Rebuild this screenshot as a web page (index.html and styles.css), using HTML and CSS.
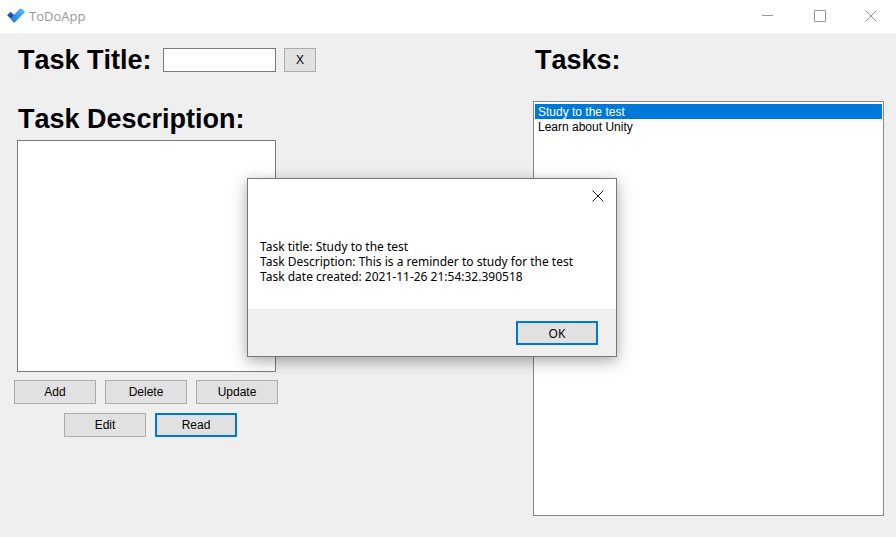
FILE: index.html
```html
<!DOCTYPE html>
<html lang="en">
<head>
<meta charset="utf-8">
<meta name="viewport" content="width=device-width, initial-scale=1">
<title>ToDoApp</title>
<link rel="stylesheet" href="styles.css">
</head>
<body>
<header class="titlebar">
  <svg class="logo" viewBox="0 0 18 16" aria-hidden="true">
    <defs>
      <linearGradient id="tick" x1="0" y1="1" x2="1" y2="0">
        <stop offset="0.25" stop-color="#2a86e2"/>
        <stop offset="1" stop-color="#56c0f8"/>
      </linearGradient>
    </defs>
    <path d="M0.3 7.2 L3.6 3.9 L10 10 L7 13.8 Z" fill="#1b55b4"/>
    <path d="M3.6 10.4 L12.8 0.8 Q13.8 0 14.8 0.8 L17.4 3.3 Q17.9 4 17.4 4.7 L7.9 14.2 Q7 15 6.2 14.2 Z" fill="url(#tick)"/>
    <path d="M0.3 7.2 L3.6 3.9 L6.9 7 L3.6 10.4 Z" fill="#1b55b4"/>
  </svg>
  <h1 class="app-name">ToDoApp</h1>
  <div class="window-controls">
    <button class="window-button" type="button" aria-label="Minimize"><svg viewBox="0 0 12 12"><path d="M0 5.5H11"/></svg></button>
    <button class="window-button" type="button" aria-label="Maximize"><svg viewBox="0 0 12 12"><path d="M0.5 0.5H11.5V11.5H0.5Z"/></svg></button>
    <button class="window-button" type="button" aria-label="Close"><svg viewBox="0 0 12 12"><path d="M0.5 0.5L11.5 11.5M11.5 0.5L0.5 11.5"/></svg></button>
  </div>
</header>
<main class="workspace">
  <form class="editor">
    <div class="title-row">
      <label class="heading" for="title">Task Title:</label>
      <input class="field title-field" id="title" type="text">
      <button class="button clear" type="button">X</button>
    </div>
    <label class="heading" for="description">Task Description:</label>
    <textarea class="field description" id="description"></textarea>
    <div class="actions">
      <button class="button" type="button">Add</button>
      <button class="button" type="button">Delete</button>
      <button class="button" type="button">Update</button>
    </div>
    <div class="actions actions-second">
      <button class="button" type="button">Edit</button>
      <button class="button default" type="button">Read</button>
    </div>
  </form>
  <section class="tasks">
    <label class="heading" for="tasks">Tasks:</label>
    <select class="field task-list" id="tasks" size="20">
      <option selected>Study to the test</option>
      <option>Learn about Unity</option>
    </select>
  </section>
</main>
<div class="dialog" role="dialog" aria-label="Task details">
  <button class="dialog-close" type="button" aria-label="Close"><svg viewBox="0 0 12 12"><path d="M0.5 0.5L11.5 11.5M11.5 0.5L0.5 11.5"/></svg></button>
  <p class="dialog-text">Task title: Study to the test<br>Task Description: This is a reminder to study for the test<br>Task date created: 2021-11-26 21:54:32.390518</p>
  <div class="dialog-footer">
    <button class="button default" type="button">OK</button>
  </div>
</div>
</body>
</html>
```
FILE: styles.css
```css
* {
  box-sizing: border-box;
}

body {
  margin: 0;
  min-height: 100vh;
  display: flex;
  flex-direction: column;
  background: #efefef;
  color: #000;
  font: 12px/15px "Liberation Sans", Arial, sans-serif;
}

button {
  font: inherit;
  color: inherit;
}

.titlebar {
  display: flex;
  align-items: center;
  height: 33px;
  padding: 0 0 2px 7px;
  background: #fff;
}

.logo {
  width: 18px;
  height: 16px;
}

.app-name {
  margin: 0 0 0 4px;
  font: 13px/20px "Open Sans", "Noto Sans", sans-serif;
  color: #999;
}

.window-controls {
  display: flex;
  align-self: stretch;
  margin-left: auto;
}

.window-button {
  display: grid;
  place-items: center;
  width: 52px;
  padding: 0;
  border: 0;
  background: none;
}

.window-button:last-child {
  width: 50px;
}

.window-button svg,
.dialog-close svg {
  width: 12px;
  height: 12px;
  fill: none;
  stroke: #999;
}

.workspace {
  flex: 1;
  display: grid;
  grid-template-columns: 520fr 351fr;
  padding: 11px 12px 21px 13px;
}

.editor {
  display: flex;
  flex-direction: column;
  align-items: flex-start;
}

.heading {
  padding-left: 5px;
  font: bold 27px/32px "Liberation Sans", Arial, sans-serif;
  font-kerning: none;
}

.title-row {
  display: flex;
  align-items: center;
  margin-bottom: 27px;
}

.title-row .heading {
  min-width: 144px;
}

.field {
  border: 1px solid #7a7a7a;
  border-radius: 0;
  background: #fff;
  font: inherit;
  outline: 0;
}

.title-field {
  width: 113px;
  height: 24px;
  margin: 0 8px 0 6px;
}

.button {
  width: 82px;
  height: 24px;
  padding: 0;
  border: 1px solid #adadad;
  background: #e1e1e1;
}

.default {
  border: 2px solid #0078d7;
}

.clear {
  width: 32px;
}

.description {
  width: 259px;
  height: 232px;
  margin: 5px 0 8px 4px;
  resize: none;
}

.actions {
  display: flex;
  gap: 9px;
  margin-left: 1px;
}

.actions-second {
  margin: 9px 0 0 51px;
}

.tasks {
  display: flex;
  flex-direction: column;
}

.tasks .heading {
  padding-left: 2px;
}

.task-list {
  flex: 1;
  margin-top: 25px;
  padding: 2px 1px;
  border-color: #828790;
  overflow: auto;
}

.task-list option {
  min-height: 15px;
  padding: 1px 3px 0;
  line-height: 14px;
  color: #000;
}

.task-list option:checked {
  background: linear-gradient(#0078d7, #0078d7);
  color: #fff;
}

.dialog {
  position: absolute;
  top: 178px;
  left: 247px;
  width: 370px;
  display: flex;
  flex-direction: column;
  border: 1px solid #777;
  background: #fff;
  box-shadow: 0 4px 14px rgba(0, 0, 0, 0.35);
  font: 12px/15px "Noto Sans", "Open Sans", sans-serif;
}

.dialog-close {
  align-self: flex-end;
  display: grid;
  place-items: center;
  width: 36px;
  height: 34px;
  padding: 0;
  border: 0;
  background: none;
}

.dialog-close svg {
  stroke: #222;
}

.dialog-text {
  margin: 0;
  padding: 26px 12px 25px;
}

.dialog-footer {
  display: flex;
  justify-content: flex-end;
  padding: 12px 18px 11px;
  background: #efefef;
}
```
